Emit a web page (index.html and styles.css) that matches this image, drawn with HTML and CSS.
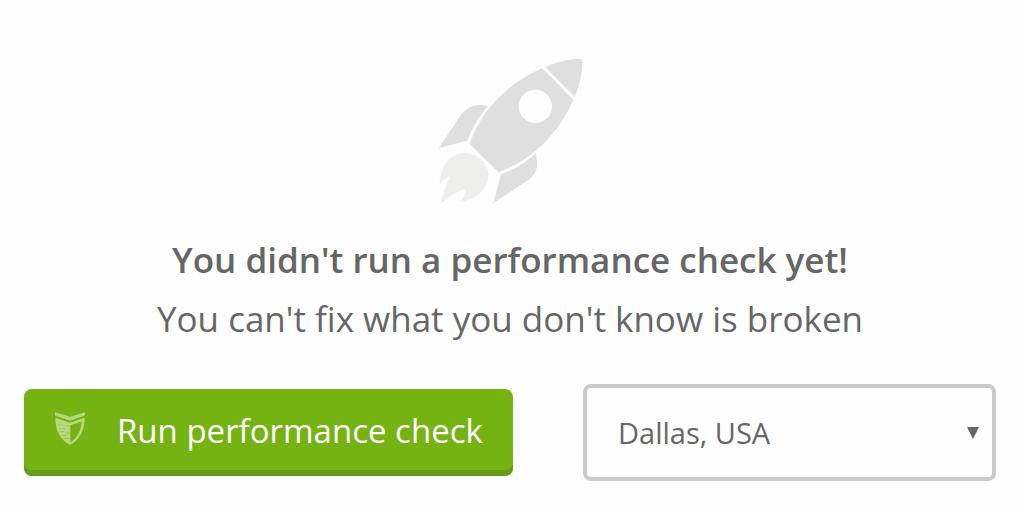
FILE: index.html
```html
<!DOCTYPE html>
<html lang="en">
<head>
<meta charset="utf-8">
<meta name="viewport" content="width=device-width, initial-scale=1">
<title>Performance check</title>
<link rel="stylesheet" href="styles.css">
</head>
<body>
<main class="panel">
  <svg class="rocket" viewBox="0 0 480 480" aria-hidden="true">
    <path class="rocket-body" d="M346 51C385 33 418 26 457 27C458 66 451 101 434 140Z"/>
    <path class="rocket-body" fill-rule="evenodd" d="M337 55L430 150C390 240 318 325 205 367L119 281C154 182 230 100 337 55ZM316 119A50 50 0 1 0 316 219A50 50 0 1 0 316 119Z"/>
    <path class="rocket-body" d="M174 169C146 201 127 233 112 272L26 295L94 193C116 166 142 159 174 169Z"/>
    <path class="rocket-body" d="M317 310C324 340 325 365 300 386L190 460L213 373C255 358 284 341 317 310Z"/>
    <path class="rocket-flame" d="M29 403C31 350 58 307 106 309C148 311 179 345 175 383C170 425 128 451 89 455C101 444 108 430 108 417C83 422 57 441 32 461C38 430 50 406 59 380C46 383 37 391 29 403Z"/>
  </svg>
  <h1 class="title">You didn't run a performance check yet!</h1>
  <p class="subtitle">You can't fix what you don't know is broken</p>
  <form class="actions">
    <button class="run" type="button">
      <svg class="shield" viewBox="0 0 90 98" aria-hidden="true">
        <path d="M0 0L45 14L90 0V10L45 26L0 10Z"/>
        <path fill-rule="evenodd" d="M1 17L45 32L89 17C89 54 75 83 45 98C15 83 1 54 1 17ZM46 39V90C66 79 78 57 80 28Z"/>
        <path class="shield-lines" d="M10 36H23M30 41H44M12 49H30M14 58H27M32 63H44M19 70H35M25 79H44"/>
      </svg>
      <span>Run performance check</span>
    </button>
    <div class="picker">
      <select class="location" aria-label="Test location">
        <option>Dallas, USA</option>
      </select>
      <svg class="arrow" viewBox="0 0 12 12" aria-hidden="true"><path d="M0 0H12L6 12Z"/></svg>
    </div>
  </form>
</main>
</body>
</html>
```
FILE: styles.css
```css
* {
  box-sizing: border-box;
}

body {
  margin: 0;
  background: #fefefe;
  color: #666;
  font-family: "Open Sans", sans-serif;
}

.panel {
  display: flex;
  flex-direction: column;
  align-items: center;
  padding: 50px 28px 28px 24px;
}

.rocket {
  width: 160px;
  height: 160px;
}

.rocket-body {
  fill: #dfdfdf;
}

.rocket-flame {
  fill: #eeeeec;
}

.title,
.subtitle {
  margin: 0;
  font-size: 35px;
  text-align: center;
}

.title {
  margin-top: 20px;
  font-weight: 600;
  line-height: 60px;
}

.subtitle {
  font-weight: 400;
  line-height: 58px;
}

.actions {
  display: grid;
  grid-template-columns: 489fr 413fr;
  align-items: center;
  gap: 70px;
  width: 100%;
  margin-top: 36px;
}

.run {
  display: flex;
  align-items: center;
  gap: 32px;
  height: 87px;
  padding: 0 30px 4px 31px;
  border: 0;
  border-radius: 8px;
  background: #75b313;
  box-shadow: inset 0 -6px #67991b;
  color: #fff;
  font: 400 33px/44px "Open Sans", sans-serif;
  white-space: nowrap;
}

.shield {
  flex: none;
  width: 30px;
  height: 33px;
  margin-bottom: 4px;
  fill: #b5d87f;
}

.shield-lines {
  fill: none;
  stroke: #9ccb58;
  stroke-width: 3;
}

.picker {
  position: relative;
}

.location {
  display: block;
  width: 100%;
  height: 97px;
  padding: 0 40px 0 31px;
  border: 4px solid #cacaca;
  border-radius: 8px;
  appearance: none;
  background: #fefefe;
  color: #666;
  font: 400 29px/40px "Open Sans", sans-serif;
}

.arrow {
  position: absolute;
  top: 43px;
  right: 17px;
  width: 12px;
  height: 12px;
  fill: #666;
  pointer-events: none;
}
```
